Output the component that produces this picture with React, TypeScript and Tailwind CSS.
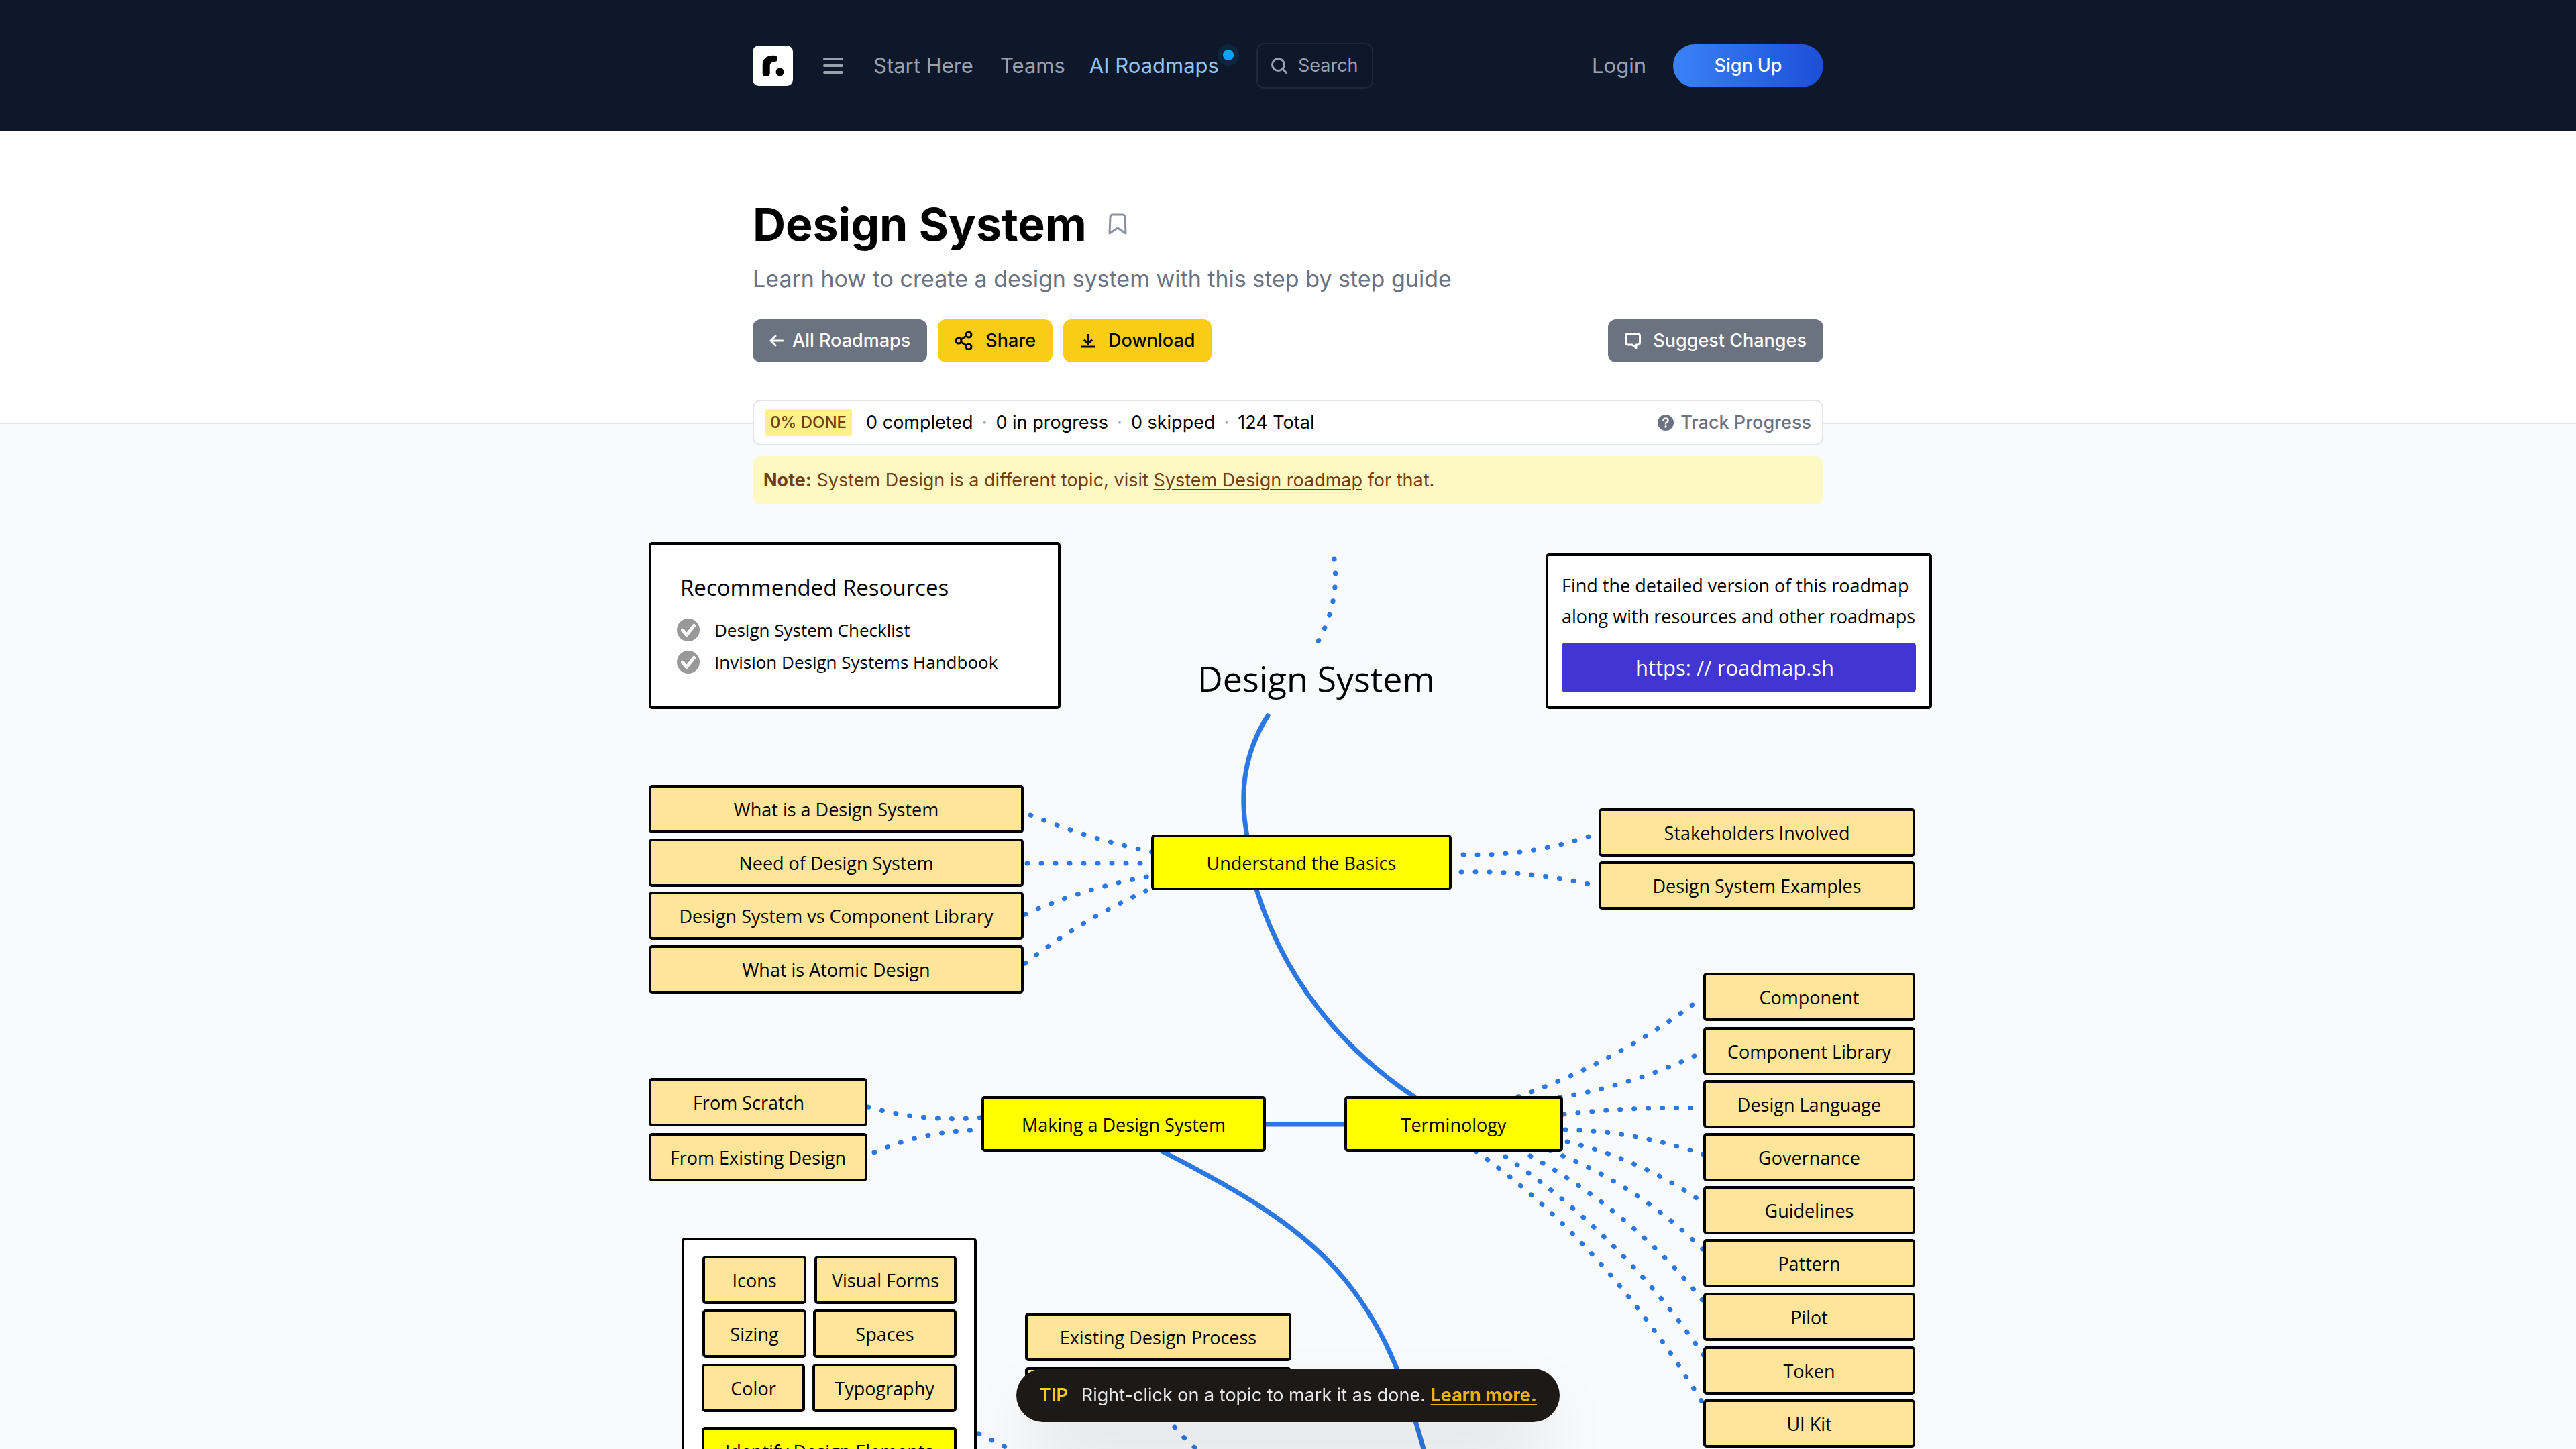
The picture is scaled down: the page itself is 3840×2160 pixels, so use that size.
import React from 'react';

type NodeBox = { label: string; box: string; main?: boolean };

const nodes: NodeBox[] = [
  { label: 'What is a Design System', box: 'left-[7px] top-[370px] w-[559px] h-[72px]' },
  { label: 'Need of Design System', box: 'left-[7px] top-[450px] w-[559px] h-[72px]' },
  { label: 'Design System vs Component Library', box: 'left-[7px] top-[529px] w-[559px] h-[72px]' },
  { label: 'What is Atomic Design', box: 'left-[7px] top-[609px] w-[559px] h-[72px]' },
  { label: 'Understand the Basics', box: 'left-[756px] top-[444px] w-[448px] h-[83px]', main: true },
  { label: 'Stakeholders Involved', box: 'left-[1423px] top-[405px] w-[472px] h-[72px]' },
  { label: 'Design System Examples', box: 'left-[1423px] top-[484px] w-[472px] h-[72px]' },
  { label: 'Component', box: 'left-[1579px] top-[650px] w-[316px] h-[72px]' },
  { label: 'Component Library', box: 'left-[1579px] top-[731px] w-[316px] h-[72px]' },
  { label: 'Design Language', box: 'left-[1579px] top-[810px] w-[316px] h-[72px]' },
  { label: 'Governance', box: 'left-[1579px] top-[889px] w-[316px] h-[72px]' },
  { label: 'Guidelines', box: 'left-[1579px] top-[968px] w-[316px] h-[72px]' },
  { label: 'Pattern', box: 'left-[1579px] top-[1047px] w-[316px] h-[72px]' },
  { label: 'Pilot', box: 'left-[1579px] top-[1127px] w-[316px] h-[72px]' },
  { label: 'Token', box: 'left-[1579px] top-[1207px] w-[316px] h-[72px]' },
  { label: 'UI Kit', box: 'left-[1579px] top-[1286px] w-[316px] h-[72px]' },
  { label: 'Terminology', box: 'left-[1044px] top-[834px] w-[326px] h-[83px]', main: true },
  { label: 'Making a Design System', box: 'left-[503px] top-[834px] w-[424px] h-[83px]', main: true },
  { label: 'From Scratch', box: 'left-[7px] top-[807px] w-[326px] h-[72px] pr-[28px]' },
  { label: 'From Existing Design', box: 'left-[7px] top-[889px] w-[326px] h-[72px]' },
  { label: 'Icons', box: 'left-[87px] top-[1072px] w-[155px] h-[72px]' },
  { label: 'Visual Forms', box: 'left-[254px] top-[1072px] w-[212px] h-[72px]' },
  { label: 'Sizing', box: 'left-[87px] top-[1152px] w-[155px] h-[72px]' },
  { label: 'Spaces', box: 'left-[252px] top-[1152px] w-[214px] h-[72px]' },
  { label: 'Color', box: 'left-[86px] top-[1233px] w-[154px] h-[72px]' },
  { label: 'Typography', box: 'left-[251px] top-[1233px] w-[215px] h-[72px]' },
  { label: 'Identify Design Elements', box: 'left-[86px] top-[1327px] w-[380px] h-[72px]', main: true },
  { label: 'Existing Design Process', box: 'left-[568px] top-[1157px] w-[397px] h-[72px]' },
];

const solidLinks = [
  'M930 267 Q880 344 899 446',
  'M913 526 Q973 717 1148 835',
  'M925 876 H1046',
  'M772 916 C1004 1034 1095 1112 1162 1360',
];

const dottedLinks = [
  'M1029 33 Q1037 98 1005 156',
  'M576 415 Q665 451 758 470',
  'M571 487 H746',
  'M568 563 Q655 524 750 507',
  'M568 636 Q651 572 748 528',
  'M1221 474 Q1316 477 1408 447',
  'M1218 500 Q1322 497 1426 522',
  'M334 850 Q416 873 501 866',
  'M343 918 Q411 888 488 885',
  'M1303 835 Q1451 783 1579 686',
  'M1365 836 Q1469 819 1566 774',
  'M1371 861 Q1475 849 1580 852',
  'M1373 884 Q1477 886 1579 921',
  'M1376 902 Q1481 927 1569 986',
  'M1350 915 Q1478 964 1578 1062',
  'M1321 923 Q1470 1005 1578 1138',
  'M1284 924 Q1458 1042 1580 1221',
  'M1240 916 Q1432 1052 1576 1288',
  'M499 1337 Q530 1352 560 1368',
  'M791 1327 Q806 1346 826 1362',
];

function Logo() {
  return (
    <svg viewBox="0 0 60 60" className="size-[60px]" role="img" aria-label="roadmap.sh">
      <rect width="60" height="60" rx="9" fill="#fff" />
      <path d="M14.700 42V29C14.700 19 21 14.700 31 14.700Q37 14.700 37 19.500T31 24.500C27 25 25.700 27 25.700 31V42Q25.700 45.500 20.200 45.500T14.700 42Z" fill="#000" />
      <circle cx="40.500" cy="39.500" r="6" fill="#000" />
    </svg>
  );
}

function CheckCircle() {
  return (
    <svg viewBox="0 0 34 34" className="size-[34px] shrink-0" aria-hidden="true">
      <circle cx="17" cy="17" r="17" fill="#999" />
      <path d="M8.500 17.500l6 7 11-14" fill="none" stroke="#fff" strokeWidth="5" strokeLinecap="round" strokeLinejoin="round" />
    </svg>
  );
}

function Header() {
  return (
    <header className="bg-[#0f172a] py-16">
      <nav className="mx-auto flex h-[68px] max-w-[1596px] items-center justify-between text-[31px] leading-[48px] text-gray-400">
        <div className="flex items-center">
          <a href="#home"><Logo /></a>
          <button type="button" aria-label="Menu" className="ml-[45px]">
            <svg viewBox="0 0 30 24" className="h-6 w-[30px]" stroke="currentColor" strokeWidth="4" strokeLinecap="round">
              <path d="M2 2H28M2 12H28M2 22H28" />
            </svg>
          </button>
          <a href="#start" className="ml-[45px]">Start Here</a>
          <a href="#teams" className="ml-10">Teams</a>
          <a href="#ai" className="relative ml-9 text-blue-300">
            AI Roadmaps
            <span className="absolute -right-[30px] -top-[8px] flex size-8 items-center justify-center rounded-full bg-sky-500/10">
              <span className="size-4 rounded-full bg-sky-500" />
            </span>
          </a>
          <button type="button" className="ml-14 flex h-[68px] items-center gap-4 rounded-xl border-2 border-gray-800 px-5 text-[27px]">
            <svg viewBox="0 0 24 24" className="size-6" fill="none" stroke="currentColor" strokeWidth="3" strokeLinecap="round">
              <circle cx="10.500" cy="10.500" r="9" />
              <path d="M17 17l5.500 5.500" />
            </svg>
            Search
          </button>
        </div>
        <div className="flex items-center gap-10">
          <a href="#login">Login</a>
          <a href="#signup" className="flex h-16 w-[224px] items-center justify-center rounded-full bg-linear-to-r from-[#3b82f6] to-[#1d4ed8] text-[27px] font-medium text-white">Sign Up</a>
        </div>
      </nav>
    </header>
  );
}

function Hero() {
  const btn = 'flex h-16 items-center rounded-xl px-[25px] text-[27px] font-medium';
  return (
    <section className="border-b-2 border-[#e5e7eb] bg-white pt-[98px] pb-[90px]">
      <div className="mx-auto max-w-[1596px]">
        <div className="flex items-center gap-8">
          <h1 className="text-[68px] leading-[80px] font-bold text-black">Design System</h1>
          <button type="button" aria-label="Bookmark" className="text-[#8a92a2]">
            <svg viewBox="0 0 28 32" className="h-8 w-7" fill="none" stroke="currentColor" strokeWidth="3" strokeLinejoin="round">
              <path d="M2 30L3 6Q3 2 7 2H21Q25 2 25 6L26 30L14 22Z" />
            </svg>
          </button>
        </div>
        <p className="mt-[14px] text-[34px] leading-[56px] text-[#6b7280]">Learn how to create a design system with this step by step guide</p>
        <div className="mt-8 flex justify-between">
          <div className="flex gap-4">
            <a href="#roadmaps" className={btn + ' bg-[#6b7280] text-white'}>
              <svg viewBox="0 0 22 18" className="mr-3 h-[18px] w-[22px]" fill="none" stroke="currentColor" strokeWidth="3" strokeLinecap="round" strokeLinejoin="round">
                <path d="M20 9H2M9 2L2 9l7 7" />
              </svg>
              All Roadmaps
            </a>
            <button type="button" className={btn + ' bg-[#facc15] text-black'}>
              <svg viewBox="0 0 28 28" className="mr-[18px] size-7" fill="none" stroke="currentColor" strokeWidth="3">
                <circle cx="21" cy="5" r="4" /><circle cx="21" cy="23" r="4" /><circle cx="6" cy="14" r="4" />
                <path d="M9.500 12L17.500 7M9.500 16L17.500 21" />
              </svg>
              Share
            </button>
            <button type="button" className={btn + ' bg-[#facc15] text-black'}>
              <svg viewBox="0 0 24 24" className="mr-[18px] size-6" fill="none" stroke="currentColor" strokeWidth="3">
                <path d="M12 2V16M6 10.500l6 6 6-6M2 21H22" />
              </svg>
              Download
            </button>
          </div>
          <a href="#suggest" className={btn + ' bg-[#6b7280] text-white'}>
            <svg viewBox="0 0 24 24" className="mr-[18px] size-6" fill="none" stroke="currentColor" strokeWidth="3" strokeLinejoin="round">
              <path d="M5 1.500H19Q22.500 1.500 22.500 5V14.500Q22.500 18 19 18H17V22.500L11 18H5Q1.500 18 1.500 14.500V5Q1.500 1.500 5 1.500Z" />
            </svg>
            Suggest Changes
          </a>
        </div>
      </div>
    </section>
  );
}

function Progress() {
  const dot = <span className="text-gray-400">·</span>;
  return (
    <div className="relative mx-auto -mt-9 flex h-[68px] max-w-[1596px] items-center justify-between rounded-xl border-2 border-[#e5e7eb] bg-white px-4 text-[27px] text-black">
      <p className="flex items-center gap-[13px]">
        <span className="mr-2 flex h-10 items-center rounded bg-[#fef08a] px-2 text-[24px] font-medium text-[#713f12]">0% DONE</span>
        <span>0 completed</span>{dot}<span>0 in progress</span>{dot}<span>0 skipped</span>{dot}<span>124 Total</span>
      </p>
      <button type="button" className="flex items-center gap-[10px] font-medium text-[#6b7280]">
        <svg viewBox="0 0 24 24" className="size-6" aria-hidden="true">
          <circle cx="12" cy="12" r="12" fill="currentColor" />
          <path d="M8.500 9Q8.500 5.500 12 5.500T15.500 9Q15.500 11 12 12.500V14.500" fill="none" stroke="#fff" strokeWidth="2.500" />
          <circle cx="12" cy="18" r="1.700" fill="#fff" />
        </svg>
        Track Progress
      </button>
    </div>
  );
}

function Roadmap() {
  return (
    <div className="relative mx-auto mt-12 h-[1360px] w-[1920px] font-['Open_Sans',sans-serif] text-[27px] font-medium text-black">
      <svg viewBox="0 0 1920 1360" className="absolute inset-0 h-full w-full" fill="none" stroke="#2b78e4" strokeWidth="7" strokeLinecap="round" aria-hidden="true">
        {solidLinks.map((d) => <path key={d} d={d} />)}
        {dottedLinks.map((d) => <path key={d} d={d} strokeDasharray="1 20" />)}
      </svg>
      <section className="absolute left-[7px] top-[8px] h-[249px] w-[614px] rounded-[5px] border-4 border-black bg-white pt-[42px] pl-[38px]">
        <h2 className="pl-[5px] text-[33px] leading-[44px]">Recommended Resources</h2>
        <ul className="mt-[17px] text-[26px] leading-[48px]">
          <li className="flex items-center gap-[22px]"><CheckCircle /><a href="#checklist">Design System Checklist</a></li>
          <li className="flex items-center gap-[22px]"><CheckCircle /><a href="#handbook">Invision Design Systems Handbook</a></li>
        </ul>
      </section>
      <h2 className="absolute left-[825px] top-[179px] text-[52px] leading-[64px]">Design System</h2>
      <section className="absolute left-[1344px] top-[25px] h-[232px] w-[576px] rounded-[5px] border-4 border-black bg-white px-5 pt-[21px]">
        <p className="leading-[46px] whitespace-nowrap">Find the detailed version of this roadmap<br />along with resources and other roadmaps</p>
        <a href="#roadmap" className="mt-4 flex h-[74px] items-center justify-center rounded-[5px] bg-[#4136d4] pr-3 text-[31px] text-white">https: // roadmap.sh</a>
      </section>
      <div className="absolute left-[56px] top-[1045px] h-[400px] w-[440px] rounded-[5px] border-4 border-black bg-white" />
      <div className="absolute left-[568px] top-[1238px] h-[72px] w-[397px] rounded-[5px] border-4 border-black bg-[#ffe599]" />
      {nodes.map((n) => (
        <button type="button" key={n.label} className={'absolute flex items-center justify-center rounded-[5px] border-4 border-black pt-[3px] whitespace-nowrap ' + (n.main ? 'bg-[#ffff00] ' : 'bg-[#ffe599] ') + n.box}>
          {n.label}
        </button>
      ))}
    </div>
  );
}

export default function App() {
  return (
    <div className="flex h-screen flex-col overflow-hidden bg-[#f9fafc] font-['Inter',sans-serif]">
      <Header />
      <Hero />
      <main className="flex-1">
        <Progress />
        <p className="mx-auto mt-4 flex h-[72px] max-w-[1596px] items-center rounded-xl bg-[#fef9c3] px-4 text-[27px] text-[#713f12]">
          <span><strong className="font-bold">Note:</strong> System Design is a different topic, visit <a href="#system-design" className="underline underline-offset-4">System Design roadmap</a> for that.</span>
        </p>
        <Roadmap />
      </main>
      <aside className="fixed inset-x-0 bottom-10 mx-auto flex h-20 w-fit items-center rounded-full bg-[#1c1917] px-[34px] text-[27px] whitespace-nowrap text-gray-200 shadow-[0_50px_100px_-24px_rgba(0,0,0,0.25)]">
        <strong className="mr-5 font-semibold text-[#facc15]">TIP</strong>
        <span>Right-click on a topic to mark it as done. <a href="#tips" className="font-bold text-[#eab308] underline underline-offset-4">Learn more.</a></span>
      </aside>
    </div>
  );
}
